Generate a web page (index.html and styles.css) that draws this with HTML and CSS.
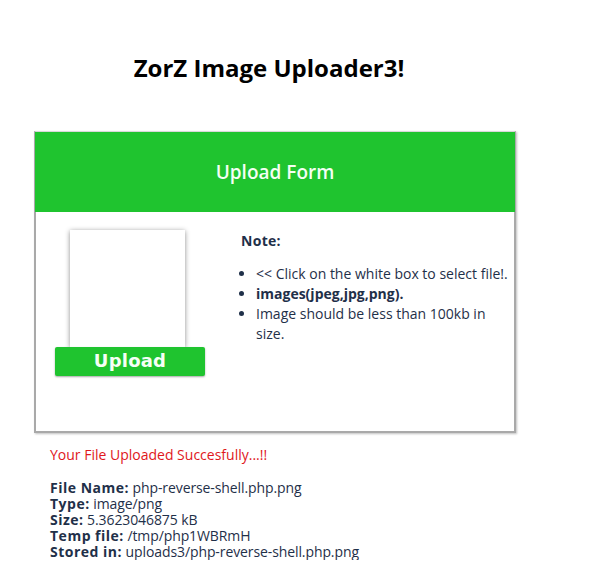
FILE: index.html
```html
<!DOCTYPE html>
<html>
<head>
<meta charset="utf-8">
<link rel="stylesheet" href="styles.css">
</head>
<body>
<div class="page">
  <h1 class="title">ZorZ Image Uploader3!</h1>
  <div class="card">
    <div class="card-head">Upload Form</div>
    <div class="card-body">
      <div class="picker">
        <div class="dropbox"></div>
        <button class="upload-btn">Upload</button>
      </div>
      <div class="note">
        <div class="note-title">Note:</div>
        <ul class="note-list">
          <li>&lt;&lt; Click on the white box to select file!.</li>
          <li><b>images(jpeg,jpg,png).</b></li>
          <li>Image should be less than 100kb in size.</li>
        </ul>
      </div>
    </div>
  </div>
  <div class="result">
    <p class="success">Your File Uploaded Succesfully...!!</p>
    <div class="info">
      <div class="row"><b>File Name:</b> php-reverse-shell.php.png</div>
      <div class="row"><b>Type:</b> image/png</div>
      <div class="row"><b>Size:</b> 5.3623046875 kB</div>
      <div class="row"><b>Temp file:</b> /tmp/php1WBRmH</div>
      <div class="row"><b>Stored in:</b> uploads3/php-reverse-shell.php.png</div>
    </div>
  </div>
</div>
</body>
</html>
```
FILE: styles.css
```css
html, body {
  margin: 0;
  padding: 0;
  background: #ffffff;
}
body {
  font-family: "Open Sans", "DejaVu Sans", sans-serif;
  color: #1f3049;
}
.page {
  padding: 0 0 0 34px;
  width: 482px;
}
.title {
  margin: 0;
  padding-top: 51px;
  height: 80px;
  box-sizing: border-box;
  font-size: 24px;
  font-weight: 700;
  line-height: 33px;
  color: #000;
  text-align: center;
  padding-right: 12px;
}
.card {
  margin-top: 51px;
  width: 482px;
  height: 302px;
  box-sizing: border-box;
  border: 2px solid #a9a9a9;
  border-top: 1px solid #d8d8d8;
  box-shadow: 1px 1px 2px rgba(0,0,0,0.25);
  background: #fff;
}
.card-head {
  height: 80px;
  background: #1fc42f;
  color: #f4fff4;
  font-size: 19px;
  font-weight: 600;
  display: flex;
  align-items: center;
  justify-content: center;
  margin: 0 -1px 0 -1px;
}
.card-body {
  display: flex;
  padding-top: 18px;
}
.picker {
  width: 150px;
  margin-left: 19px;
  display: flex;
  flex-direction: column;
  align-items: flex-start;
}
.dropbox {
  width: 115px;
  height: 117px;
  margin-left: 15px;
  background: #fff;
  box-shadow: 0 1px 5px rgba(0,0,0,0.45);
}
.upload-btn {
  width: 150px;
  height: 29px;
  border: none;
  border-radius: 2px;
  background: #1fc42f;
  color: #f6fff6;
  font-family: "DejaVu Sans", sans-serif;
  font-weight: 700;
  font-size: 18px;
  line-height: 27px;
  letter-spacing: 0.2px;
  box-shadow: 0 1px 2px rgba(0,0,0,0.35);
  padding: 0 0 2px 0;
}
.note {
  margin-left: 36px;
  width: 272px;
  font-size: 14px;
  line-height: 20px;
}
.note-title {
  font-weight: 700;
  margin-top: 1px;
  letter-spacing: 0.3px;
}
.note-list {
  margin: 13px 0 0 0;
  padding-left: 15px;
}
.note-list b {
  font-weight: 700;
}
.result {
  padding-left: 16px;
  font-size: 14px;
}
.success {
  color: #e0171c;
  margin: 12px 0 0 0;
  line-height: 20px;
}
.info {
  margin-top: 15px;
}
.row {
  height: 16px;
  line-height: 16px;
  letter-spacing: -0.1px;
}
.info b {
  font-weight: 700;
  letter-spacing: 0.5px;
}
```
